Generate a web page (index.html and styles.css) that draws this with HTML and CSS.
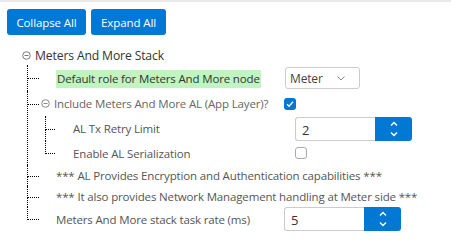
FILE: index.html
```html
<!DOCTYPE html>
<html lang="en">
<head>
    <meta charset="UTF-8">
    <meta name="viewport" content="width=device-width, initial-scale=1.0">
    <title>Meters And More Stack</title>
    <link rel="stylesheet" href="styles.css">
</head>
<body>
    <div class="toolbar">
        <button class="btn btn-collapse">Collapse All</button>
        <button class="btn btn-expand">Expand All</button>
    </div>

    <ul class="tree">
        <li class="root">
            <div class="row row-root">
                <span class="toggle"><svg width="9" height="9" viewBox="0 0 9 9"><circle cx="4.5" cy="4.5" r="3.8" fill="none" stroke="#777" stroke-width="1"/><line x1="2.5" y1="4.5" x2="6.5" y2="4.5" stroke="#777" stroke-width="1"/></svg></span>
                <span class="title">Meters And More Stack</span>
            </div>
            <ul class="children">
                <li class="item h-select">
                    <div class="row">
                        <span class="spacer"></span>
                        <span class="label"><span class="hl">Default role for Meters And More node</span></span>
                        <div class="select">
                            <span>Meter</span>
                            <svg class="caret" width="8" height="5" viewBox="0 0 8 5"><polyline points="0.5,0.5 4,4 7.5,0.5" fill="none" stroke="#888" stroke-width="1"/></svg>
                        </div>
                    </div>
                </li>
                <li class="item h-group">
                    <div class="row">
                        <span class="toggle"><svg width="9" height="9" viewBox="0 0 9 9"><circle cx="4.5" cy="4.5" r="3.8" fill="none" stroke="#888" stroke-width="1"/><line x1="2.5" y1="4.5" x2="6.5" y2="4.5" stroke="#888" stroke-width="1"/></svg></span>
                        <span class="label label-group">Include Meters And More AL (App Layer)?</span>
                        <span class="check on"><svg width="12" height="12" viewBox="0 0 12 12"><polyline points="3,6.2 5.1,8.2 9,3.8" fill="none" stroke="#fff" stroke-width="1.4"/></svg></span>
                    </div>
                    <ul class="children sub">
                        <li class="item h-num">
                            <div class="row">
                                <span class="spacer"></span>
                                <span class="label label-sub">AL Tx Retry Limit</span>
                                <div class="num">
                                    <span class="num-val">2</span>
                                    <span class="spin"><svg width="8" height="16" viewBox="0 0 8 16"><polyline points="1,4.5 4,1.5 7,4.5" fill="none" stroke="#fff" stroke-width="1.4"/><polyline points="1,11.5 4,14.5 7,11.5" fill="none" stroke="#fff" stroke-width="1.4"/></svg></span>
                                </div>
                            </div>
                        </li>
                        <li class="item h-check">
                            <div class="row">
                                <span class="spacer"></span>
                                <span class="label label-sub">Enable AL Serialization</span>
                                <span class="check"></span>
                            </div>
                        </li>
                    </ul>
                </li>
                <li class="item h-note">
                    <div class="row">
                        <span class="spacer"></span>
                        <span class="label">*** AL Provides Encryption and Authentication capabilities ***</span>
                    </div>
                </li>
                <li class="item h-note">
                    <div class="row">
                        <span class="spacer"></span>
                        <span class="label">*** It also provides Network Management handling at Meter side ***</span>
                    </div>
                </li>
                <li class="item h-num">
                    <div class="row">
                        <span class="spacer"></span>
                        <span class="label label-rate">Meters And More stack task rate (ms)</span>
                        <div class="num">
                            <span class="num-val">5</span>
                            <span class="spin"><svg width="8" height="16" viewBox="0 0 8 16"><polyline points="1,4.5 4,1.5 7,4.5" fill="none" stroke="#fff" stroke-width="1.4"/><polyline points="1,11.5 4,14.5 7,11.5" fill="none" stroke="#fff" stroke-width="1.4"/></svg></span>
                        </div>
                    </div>
                </li>
            </ul>
        </li>
    </ul>
</body>
</html>
```

FILE: styles.css
```css
body {
    margin: 0;
    font-family: "Open Sans", "Noto Sans", sans-serif;
    font-size: 11.5px;
    letter-spacing: -0.15px;
    color: #555;
    background: #fff;
    border-top: 2px solid #e9e9e9;
}
.toolbar {
    display: flex;
    gap: 5px;
    padding: 7px 0 0 7px;
}
.btn {
    height: 26px;
    border: none;
    border-radius: 3px;
    background-color: #0078d4;
    color: #fff;
    font-family: inherit;
    font-size: 11.5px;
    letter-spacing: -0.1px;
    padding: 0;
    cursor: pointer;
}
.btn-collapse {
    width: 79px;
}
.btn-expand {
    width: 75px;
}
.tree, .children {
    list-style: none;
    margin: 0;
    padding: 0;
}
.tree {
    padding: 10px 0 0 22px;
}
.row {
    display: flex;
    align-items: center;
    height: var(--h);
}
.row-root {
    --h: 20px;
}
.title {
    color: #333;
    font-size: 12.2px;
}
.toggle {
    display: flex;
    width: 9px;
    height: 9px;
    margin-right: 4px;
}
.children {
    margin-left: 5px;
}
.children.sub {
    margin-left: 4px;
}
.item {
    position: relative;
    padding-left: 14px;
}
.item::before {
    content: "";
    position: absolute;
    left: 0;
    top: 0;
    width: 11px;
    height: calc(var(--h) / 2);
    border-left: 1px dotted #000;
    border-bottom: 1px dotted #000;
}
.item::after {
    content: "";
    position: absolute;
    left: 0;
    top: calc(var(--h) / 2);
    bottom: 0;
    border-left: 1px dotted #000;
}
.item:last-child::after {
    display: none;
}
.sub .item::before {
    width: 9px;
}
.h-select { --h: 26px; }
.h-group { --h: 25px; }
.h-num { --h: 25px; }
.h-check { --h: 24px; }
.h-note { --h: 21px; }
.children > .h-num:last-child { --h: 24px; }
.spacer {
    width: 15px;
    flex: none;
}
.sub .spacer {
    width: 14px;
}
.label {
    width: 229px;
    flex: none;
    white-space: nowrap;
}
.label-group {
    width: 230px;
    color: #666;
}
.label-sub {
    width: 222px;
}
.label-rate {
    width: 228px;
}
.hl {
    background: #c0f5c0;
    color: #333;
    padding: 1px 1px 2px 1px;
}
.select {
    display: flex;
    align-items: center;
    width: 75px;
    height: 22px;
    box-sizing: border-box;
    border: 1px solid #ccc;
    border-radius: 3px;
    padding: 0 14px 0 4px;
    color: #444;
    font-size: 12px;
}
.caret {
    margin-left: auto;
}
.check {
    display: flex;
    width: 12px;
    height: 12px;
    box-sizing: border-box;
    border: 1px solid #aaa;
    border-radius: 3px;
}
.check.on {
    background: #0078d4;
    border: none;
}
.num {
    display: flex;
    height: 24px;
}
.num-val {
    width: 80px;
    box-sizing: border-box;
    border: 1px solid #ccc;
    border-right: none;
    border-radius: 3px 0 0 3px;
    padding: 3px 0 0 6px;
    font-size: 13px;
    color: #333;
}
.spin {
    display: flex;
    align-items: center;
    justify-content: center;
    width: 37px;
    background: #0078d4;
    border-radius: 0 3px 3px 0;
}
```
